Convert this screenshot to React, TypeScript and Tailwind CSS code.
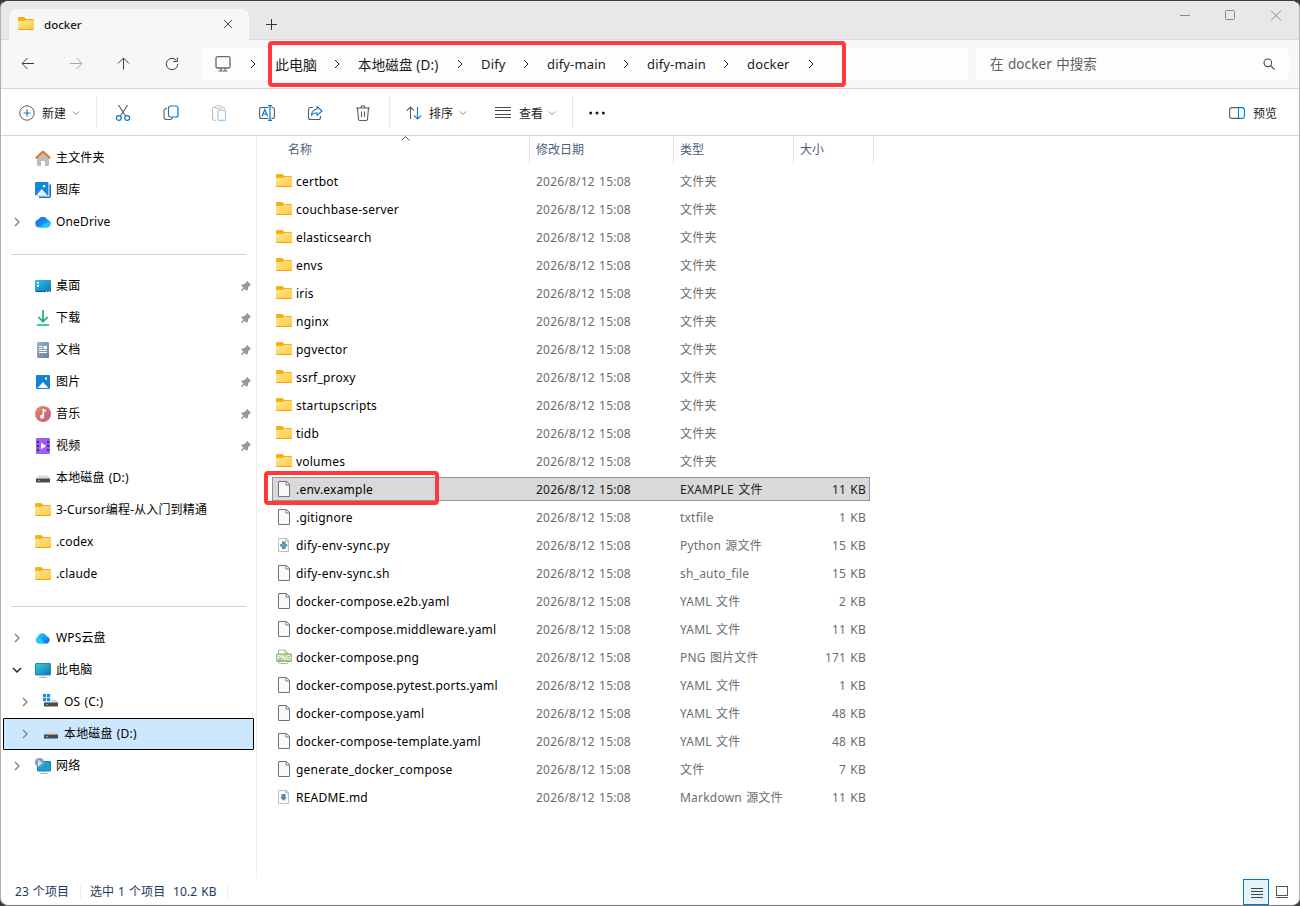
import type { ReactNode } from 'react'
import clsx from 'clsx'

type IconProps = { className?: string }

type NavItem = {
  label: string
  icon: ReactNode
  pinned?: boolean
  expand?: 'closed' | 'open'
  nested?: boolean
  selected?: boolean
}

type FileKind = 'folder' | 'file' | 'python' | 'png' | 'markdown'

type FileRow = {
  name: string
  kind: FileKind
  type: string
  size?: string
  selected?: boolean
}

/* ---------- icons ---------- */

function Chevron({ className }: IconProps) {
  return (
    <svg viewBox="0 0 10 10" className={clsx('size-[10px] shrink-0', className)} fill="none" stroke="currentColor">
      <path d="M3 1l4 4-4 4" />
    </svg>
  )
}

function ChevronDown({ className }: IconProps) {
  return (
    <svg viewBox="0 0 8 8" className={clsx('size-2 shrink-0', className)} fill="none" stroke="currentColor">
      <path d="M1 2.5l3 3 3-3" />
    </svg>
  )
}

function FolderIcon({ className }: IconProps) {
  return (
    <svg viewBox="0 0 16 16" className={clsx('size-4 shrink-0', className)}>
      <defs>
        <linearGradient id="folder" x1="0" y1="0" x2="1" y2="1">
          <stop offset="0" stopColor="#ffe69a" />
          <stop offset="1" stopColor="#ffc937" />
        </linearGradient>
      </defs>
      <path d="M0 2.2Q0 1 1.2 1h4.600q.6 0 1 .4L8.400 3H14.800Q16 3 16 4.200V8H0z" fill="#f5b012" />
      <path d="M0 5h6.400l1.600-1h7q1 0 1 1v8q0 1-1 1H1q-1 0-1-1z" fill="url(#folder)" />
      <path d="M.4 13.500h15.200" stroke="#e8a617" strokeWidth="1" />
    </svg>
  )
}

function FileIcon() {
  return (
    <svg viewBox="0 0 16 16" className="size-4 shrink-0" fill="#fafafa" stroke="#757575">
      <path d="M2.500.5h8l3 3v12h-11z" />
      <path d="M10 .5V4h3.500" fill="none" />
    </svg>
  )
}

function PythonIcon() {
  return (
    <svg viewBox="0 0 16 16" className="size-4 shrink-0">
      <path d="M2.500 1.500h8l2 2v11h-10z" fill="#fafafa" stroke="#c2c2c2" />
      <path d="M10 1v3h3" fill="none" stroke="#a5a5a5" />
      <path d="M6 4.500h3.500V7H11l.5 2.500H9.500V12H6V9.500H4L4.300 7H6z" fill="#4a8db0" />
      <path d="M6 8h3.500" stroke="#d5e6ee" strokeWidth=".6" />
    </svg>
  )
}

function MarkdownIcon() {
  return (
    <svg viewBox="0 0 16 16" className="size-4 shrink-0">
      <path d="M2.500 1.500h8l2 2v11h-10z" fill="#fafafa" stroke="#c2c2c2" />
      <path d="M10 1v3h3" fill="none" stroke="#a5a5a5" />
      <path d="M5.500 5h4v3.500H11l-3.500 3.300L4 8.500h1.500z" fill="#4a8db0" />
    </svg>
  )
}

function PngIcon() {
  return (
    <svg viewBox="0 0 16 16" className="size-4 shrink-0 overflow-visible tracking-normal">
      <path d="M2.500 5V2q0-1 1-1H9l3.500 3.500M9 1v3.500h3.500M2.500 12.500q0 2 2 2h6q2 0 2-2" fill="none" stroke="#9cc283" />
      <rect y="4.500" width="16" height="8.500" rx="1" fill="#9cc283" />
      <text x="8" y="11.200" textAnchor="middle" fill="#fff" fontSize="6.500" fontWeight="700" fontFamily="Liberation Sans, sans-serif">
        PNG
      </text>
    </svg>
  )
}

const fileIcons: Record<FileKind, ReactNode> = {
  folder: <FolderIcon className="-mt-px" />,
  file: <FileIcon />,
  python: <PythonIcon />,
  png: <PngIcon />,
  markdown: <MarkdownIcon />,
}

function HomeIcon() {
  return (
    <svg viewBox="0 0 16 16" className="size-4">
      <path d="M2 7l6-5 6 5v8q0 1-1 1h-3v-5H6v5H3q-1 0-1-1z" fill="#bdbdbd" />
      <path d="M.8 8.300L8 1.600l7.200 6.700" fill="none" stroke="#e87524" strokeWidth="2" strokeLinejoin="round" />
    </svg>
  )
}

function GalleryIcon() {
  return (
    <svg viewBox="0 0 16 16" className="size-4">
      <path d="M4 15.200h10q1.200 0 1.200-1.200V2.500" fill="none" stroke="#2768b4" strokeWidth="1.600" />
      <rect width="13.500" height="13.500" rx="1" fill="#1688d9" />
      <path d="M1 13.500l5.800-6.500 5.700 6.500z" fill="#eaf5fd" />
      <rect x="8" y="3" width="2.200" height="2.200" fill="#fff" />
    </svg>
  )
}

function CloudIcon({ className }: IconProps) {
  return (
    <svg viewBox="0 0 16 16" className={clsx('size-4', className)}>
      <defs>
        <linearGradient id="cloud" x1="0" y1="0" x2="1" y2="1">
          <stop offset="0" stopColor="#1a68e0" />
          <stop offset=".5" stopColor="#1487f2" />
          <stop offset="1" stopColor="#28c9f8" />
        </linearGradient>
      </defs>
      <path d="M4 13.500a4 4 0 0 1-.6-7.900 5 5 0 0 1 9-.2A4.200 4.200 0 0 1 12 13.500z" fill="url(#cloud)" />
      <path d="M5 13.500Q9 8.500 15.600 8q.8 1.500 0 3-1.200 2.500-3.600 2.500z" fill="#27c4f7" />
    </svg>
  )
}

function WpsCloudIcon() {
  return (
    <svg viewBox="0 0 16 16" className="size-4">
      <defs>
        <linearGradient id="wps" x1="0" y1="0" x2="1" y2="1">
          <stop offset="0" stopColor="#23d4f5" />
          <stop offset=".55" stopColor="#1599fa" />
          <stop offset="1" stopColor="#1d58ee" />
        </linearGradient>
      </defs>
      <path d="M4.500 13.500A3.500 3.500 0 0 1 3 6.800a4.600 4.600 0 0 1 8.700-.6 3.800 3.800 0 0 1 .3 7.300z" fill="url(#wps)" />
      <path d="M4.500 13.500A3.500 3.500 0 0 1 2.600 7q3 .3 4.400 3.200 1.500 2.800 4 3.300z" fill="#1fd0f4" />
    </svg>
  )
}

function DesktopIcon() {
  return (
    <svg viewBox="0 0 16 16" className="size-4">
      <defs>
        <linearGradient id="desk" x1="0" y1="0" x2="1" y2="1">
          <stop offset="0" stopColor="#2cc5dd" />
          <stop offset="1" stopColor="#1173bd" />
        </linearGradient>
      </defs>
      <rect y="2" width="16" height="12" rx="1" fill="url(#desk)" />
      <path d="M2 4h2v1.700H2zM2 7h2v1.700H2z" fill="#fff" />
      <path d="M1 13.500h14" stroke="#0f5a93" />
      <path d="M11 13.500h1M13.500 13.500h1" stroke="#fff" />
    </svg>
  )
}

function DownloadIcon() {
  return (
    <svg viewBox="0 0 16 16" className="size-4" fill="none" stroke="#17ab8d" strokeWidth="1.700">
      <path d="M8 0v11.500M3.300 7L8 11.700 12.700 7M2 15h12" />
    </svg>
  )
}

function DocumentIcon() {
  return (
    <svg viewBox="0 0 16 16" className="size-4">
      <defs>
        <linearGradient id="doc" x1="0" y1="0" x2="1" y2="1">
          <stop offset="0" stopColor="#9db1c9" />
          <stop offset="1" stopColor="#6681a3" />
        </linearGradient>
      </defs>
      <rect x="2" width="12" height="16" rx="1" fill="url(#doc)" />
      <path d="M4 4.500h3.500M4 6.500h3.500M4 8.500h8M4 10.500h8" stroke="#fff" />
      <rect x="8.500" y="4" width="3.500" height="3" fill="#fff" />
    </svg>
  )
}

function PictureIcon() {
  return (
    <svg viewBox="0 0 16 16" className="size-4">
      <rect x="1" y="1" width="14" height="14" rx="1" fill="#1583d2" />
      <path d="M2.500 14L8 8l5.500 6z" fill="#f2f9fe" />
      <rect x="10" y="3.500" width="2" height="2" fill="#fff" />
    </svg>
  )
}

function MusicIcon() {
  return (
    <svg viewBox="0 0 16 16" className="size-4">
      <defs>
        <linearGradient id="music" x1="0" y1="0" x2="1" y2="1">
          <stop offset="0" stopColor="#ec8858" />
          <stop offset="1" stopColor="#b85a94" />
        </linearGradient>
      </defs>
      <circle cx="8" cy="8" r="8" fill="url(#music)" />
      <path d="M8.300 10.500V3.500l2.700 1.700" fill="none" stroke="#fff" strokeWidth="1.500" />
      <circle cx="7" cy="10.800" r="2" fill="#fff" />
    </svg>
  )
}

function VideoIcon() {
  return (
    <svg viewBox="0 0 16 16" className="size-4">
      <rect x="1" width="14" height="16" rx="1" fill="#a05cf0" />
      <path d="M3 3v12M13 3v12" stroke="#3f2466" strokeWidth="1.800" strokeDasharray="2 2" />
      <path d="M6 4.700v6.600L11.200 8z" fill="#fff" />
    </svg>
  )
}

function DriveIcon({ system }: { system?: boolean }) {
  return (
    <svg viewBox="0 0 16 16" className="size-4">
      <path d="M3 5.500h10l2 3H1z" fill="#dadada" />
      <rect x="1" y="8.500" width="14" height="4" rx=".5" fill="#4b4b4b" />
      <path d="M3 10.500h2" stroke="#3ddb69" strokeWidth="1" />
      {system && (
        <>
          <rect width="8" height="8" fill="#fff" />
          <path d="M0 0h3.200v3.200H0zM4 0h3.200v3.200H4zM0 4h3.200v3.200H0zM4 4h3.200v3.200H4z" fill="#1590e0" />
        </>
      )}
    </svg>
  )
}

function ComputerIcon() {
  return (
    <svg viewBox="0 0 16 16" className="size-4">
      <defs>
        <linearGradient id="pc" x1="0" y1="0" x2="1" y2="1">
          <stop offset="0" stopColor="#35d0dc" />
          <stop offset="1" stopColor="#1471b6" />
        </linearGradient>
      </defs>
      <rect x=".5" y="1.500" width="15" height="11.500" rx=".5" fill="url(#pc)" stroke="#2583ae" />
      <path d="M8 13v2.500M4 15.500h8" stroke="#a9b4bd" />
    </svg>
  )
}

function NetworkIcon() {
  return (
    <svg viewBox="0 0 16 16" className="size-4">
      <rect x="2.500" y="3.500" width="13" height="9.500" rx=".5" fill="#1b9fd0" stroke="#2176a8" />
      <path d="M9 13v2.500M5 15.500h8" stroke="#a9b4bd" />
      <circle cx="4.500" cy="4.500" r="4.500" fill="#6f9fc4" />
      <path d="M1.500 2.500q1.500-1.500 3 0T7 4 5 7 3 5 1.500 2.500z" fill="#d3e5f0" />
    </svg>
  )
}

function PinIcon() {
  return (
    <svg viewBox="0 0 12 12" className="size-3 shrink-0" fill="#8e9aa3">
      <path d="M7 .8L11.200 5l-1.400.6-1.600 1.700-.4 2.700-1.200.7-2-2L1.500 11.200l-.7-.7L3.300 7.600l-2-2L2 4.400l2.700-.4L6.400 2.200z" />
    </svg>
  )
}

/* ---------- data ---------- */

const quickLinks: NavItem[] = [
  { label: '主文件夹', icon: <HomeIcon /> },
  { label: '图库', icon: <GalleryIcon /> },
  { label: 'OneDrive', icon: <CloudIcon />, expand: 'closed' },
]

const pinnedLinks: NavItem[] = [
  { label: '桌面', icon: <DesktopIcon />, pinned: true },
  { label: '下载', icon: <DownloadIcon />, pinned: true },
  { label: '文档', icon: <DocumentIcon />, pinned: true },
  { label: '图片', icon: <PictureIcon />, pinned: true },
  { label: '音乐', icon: <MusicIcon />, pinned: true },
  { label: '视频', icon: <VideoIcon />, pinned: true },
  { label: '本地磁盘 (D:)', icon: <DriveIcon /> },
  { label: '3-Cursor编程-从入门到精通', icon: <FolderIcon /> },
  { label: '.codex', icon: <FolderIcon /> },
  { label: '.claude', icon: <FolderIcon /> },
]

const treeLinks: NavItem[] = [
  { label: 'WPS云盘', icon: <WpsCloudIcon />, expand: 'closed' },
  { label: '此电脑', icon: <ComputerIcon />, expand: 'open' },
  { label: 'OS (C:)', icon: <DriveIcon system />, expand: 'closed', nested: true },
  { label: '本地磁盘 (D:)', icon: <DriveIcon />, expand: 'closed', nested: true, selected: true },
  { label: '网络', icon: <NetworkIcon />, expand: 'closed' },
]

const files: FileRow[] = [
  { name: 'certbot', kind: 'folder', type: '文件夹' },
  { name: 'couchbase-server', kind: 'folder', type: '文件夹' },
  { name: 'elasticsearch', kind: 'folder', type: '文件夹' },
  { name: 'envs', kind: 'folder', type: '文件夹' },
  { name: 'iris', kind: 'folder', type: '文件夹' },
  { name: 'nginx', kind: 'folder', type: '文件夹' },
  { name: 'pgvector', kind: 'folder', type: '文件夹' },
  { name: 'ssrf_proxy', kind: 'folder', type: '文件夹' },
  { name: 'startupscripts', kind: 'folder', type: '文件夹' },
  { name: 'tidb', kind: 'folder', type: '文件夹' },
  { name: 'volumes', kind: 'folder', type: '文件夹' },
  { name: '.env.example', kind: 'file', type: 'EXAMPLE 文件', size: '11 KB', selected: true },
  { name: '.gitignore', kind: 'file', type: 'txtfile', size: '1 KB' },
  { name: 'dify-env-sync.py', kind: 'python', type: 'Python 源文件', size: '15 KB' },
  { name: 'dify-env-sync.sh', kind: 'file', type: 'sh_auto_file', size: '15 KB' },
  { name: 'docker-compose.e2b.yaml', kind: 'file', type: 'YAML 文件', size: '2 KB' },
  { name: 'docker-compose.middleware.yaml', kind: 'file', type: 'YAML 文件', size: '11 KB' },
  { name: 'docker-compose.png', kind: 'png', type: 'PNG 图片文件', size: '171 KB' },
  { name: 'docker-compose.pytest.ports.yaml', kind: 'file', type: 'YAML 文件', size: '1 KB' },
  { name: 'docker-compose.yaml', kind: 'file', type: 'YAML 文件', size: '48 KB' },
  { name: 'docker-compose-template.yaml', kind: 'file', type: 'YAML 文件', size: '48 KB' },
  { name: 'generate_docker_compose', kind: 'file', type: '文件', size: '7 KB' },
  { name: 'README.md', kind: 'markdown', type: 'Markdown 源文件', size: '11 KB' },
]

const crumbs = [
  { label: '此电脑', width: 'w-[42px] text-sm' },
  { label: '本地磁盘 (D:)', width: 'w-[82px] text-[13.500px] tracking-[0.15px]' },
  { label: 'Dify', width: 'w-[25px] text-[13px] tracking-[0.15px]' },
  { label: 'dify-main', width: 'w-[59px] text-[13px] tracking-[0.15px]' },
  { label: 'dify-main', width: 'w-[59px] text-[13px] tracking-[0.15px]' },
  { label: 'docker', width: 'w-[44px] text-[13px] tracking-[0.15px]' },
]

/* ---------- sections ---------- */

function TitleBar() {
  return (
    <div className="flex h-[39px] shrink-0 border-b border-[#d9d9d9] bg-[#e8e8e8] pl-2">
      <div className="mt-2 flex h-[31px] w-[240px] items-center rounded-t-lg bg-[#f7f7f7] pr-4 pl-[9px]">
        <FolderIcon className="-mt-0.5" />
        <span className="ml-2.5 flex-1 text-[11.500px] font-medium text-[#1a1a1a]">docker</span>
        <svg viewBox="0 0 10 10" className="-mt-0.5 size-[10px]" fill="none" stroke="#444">
          <path d="M1 1l8 8M9 1L1 9" />
        </svg>
      </div>
      <svg viewBox="0 0 11 11" className="mt-[18px] ml-[17px] size-[11px]" fill="none" stroke="#333">
        <path d="M5.500 0v11M0 5.500h11" />
      </svg>
      <div className="mt-[9px] mr-[17px] ml-auto flex h-[11px] gap-[35px] text-[#8a8a8a]">
        <svg viewBox="0 0 11 11" className="size-[11px]" stroke="currentColor">
          <path d="M1 5.500h10" />
        </svg>
        <svg viewBox="0 0 11 11" className="size-[11px]" fill="none" stroke="currentColor">
          <rect x=".5" y=".5" width="9" height="9" rx="1" />
        </svg>
        <svg viewBox="0 0 11 11" className="size-[11px]" fill="none" stroke="currentColor">
          <path d="M0 .5l10 10M10 .5l-10 10" />
        </svg>
      </div>
    </div>
  )
}

function NavButton({ children, muted }: { children: ReactNode; muted?: boolean }) {
  return (
    <button className={clsx('flex w-12 justify-center', muted ? 'text-[#a8a8a8]' : 'text-[#3b3b3b]')}>
      <svg viewBox="0 0 14 14" className="size-[14px]" fill="none" stroke="currentColor">
        {children}
      </svg>
    </button>
  )
}

function AddressBar() {
  return (
    <div className="flex h-[49px] shrink-0 items-center border-b border-[#d6d6d6] bg-[#f7f7f7] pr-2.5 pl-[3px]">
      <NavButton>
        <path d="M13 6.500H1.500M6.500 1L1 6.500 6.500 12" />
      </NavButton>
      <NavButton muted>
        <path d="M1 6.500h11.500M7.500 1L13 6.500 7.500 12" />
      </NavButton>
      <NavButton>
        <path d="M6.500 12.500V1.500M1 6.500L6.500 1 12 6.500" />
      </NavButton>
      <NavButton>
        <path d="M12.700 7A5.700 5.700 0 1 1 11 3M12.300.5v4h-4" />
      </NavButton>
      <div className="ml-[6px] flex h-8 w-[766px] items-center rounded-[4px] bg-[#fdfdfd] text-[#1b1b1b]">
        <svg viewBox="0 0 16 16" className="ml-[13px] size-4" fill="none" stroke="#666">
          <rect x="1" y=".7" width="14" height="11.300" rx="1.500" strokeWidth="1.300" />
          <path d="M6 12v3M10 12v3M3.500 15h9" strokeWidth="1.200" />
        </svg>
        <span className="flex w-[44px] justify-center">
          <Chevron />
        </span>
        {crumbs.map((crumb, i) => (
          <div key={i} className="flex items-center">
            <span className={clsx('pt-0.5 whitespace-nowrap', crumb.width)}>{crumb.label}</span>
            <span className="flex w-[41px] justify-center pr-0.5">
              <Chevron />
            </span>
          </div>
        ))}
      </div>
      <div className="ml-2 flex h-8 flex-1 items-center justify-between rounded-[4px] bg-[#fdfdfd] pr-[14px] pl-[14px] text-[13.500px] tracking-[0.1px] text-[#5f5f5f] [word-spacing:0.7px]">
        <span className="pt-px">在 docker 中搜索</span>
        <svg viewBox="0 0 12 12" className="size-3" fill="none" stroke="#444" strokeWidth="1.100">
          <circle cx="4.800" cy="4.800" r="3.800" />
          <path d="M7.600 7.600l4 4" />
        </svg>
      </div>
    </div>
  )
}

function ToolDivider({ className }: IconProps) {
  return <span className={clsx('-mt-0.5 h-8 w-px shrink-0 bg-[#e8e8e8]', className)} />
}

function Toolbar() {
  return (
    <div className="flex h-[47px] shrink-0 items-center border-b border-[#d6d6d6] bg-white pt-0.5 text-xs text-[#1b1b1b]">
      <svg viewBox="0 0 16 16" className="ml-[18px] size-4" fill="none">
        <circle cx="8" cy="8" r="7.200" stroke="#5b5b5b" />
        <path d="M8 4.500v7M4.500 8h7" stroke="#0a78d0" strokeWidth="1.200" />
      </svg>
      <span className="ml-[7px] pt-px">新建</span>
      <ChevronDown className="ml-[6px] text-[#8a8a8a]" />
      <ToolDivider className="ml-4" />
      <div className="flex w-[292px] items-center gap-8 pl-[18px]">
        <svg viewBox="0 0 16 16" className="size-4 shrink-0" fill="none">
          <path d="M3.500 0l7 11M12.500 0l-7 11" stroke="#5b5b5b" strokeWidth="1.100" />
          <circle cx="3.800" cy="13" r="2.400" stroke="#0a78d0" strokeWidth="1.200" />
          <circle cx="12.200" cy="13" r="2.400" stroke="#0a78d0" strokeWidth="1.200" />
        </svg>
        <svg viewBox="0 0 16 16" className="size-4 shrink-0" fill="none">
          <path d="M4 3.500H3Q1 4 1 6v6q0 2.500 2.500 2.500H7q2 0 2.500-2" stroke="#5b5b5b" strokeWidth="1.100" />
          <rect x="5.500" y="1" width="9.500" height="11" rx="2" stroke="#0a78d0" strokeWidth="1.200" />
        </svg>
        <svg viewBox="0 0 16 16" className="size-4 shrink-0" fill="none">
          <path d="M5 15.300H3q-1.500 0-1.500-1.500v-10q0-1.500 1.500-1.500h1.500M11 2.300h1q1.500 0 1.500 1.500" stroke="#bdbdbd" strokeWidth="1.100" />
          <rect x="4.500" y=".8" width="6" height="2.500" rx="1" stroke="#bdbdbd" />
          <rect x="7" y="5.200" width="7.500" height="10.200" rx="1" stroke="#9dcbee" strokeWidth="1.200" />
        </svg>
        <svg viewBox="0 0 16 16" className="size-4 shrink-0" fill="none">
          <path d="M9.500 2.500H2.500Q.6 2.500.6 4.500v7q0 2 1.900 2h7M12.500 2.500h1q1.900 0 1.900 2v7q0 2-1.900 2h-1" stroke="#5b5b5b" strokeWidth="1.100" />
          <path d="M3 11.300L5.800 4.500l2.800 6.800M4 9h3.700M11 .6v14.800M9 .6h4M9 15.400h4" stroke="#0a78d0" strokeWidth="1.200" />
        </svg>
        <svg viewBox="0 0 16 16" className="size-4 shrink-0" fill="none">
          <path d="M6 2.500H3.500Q1.500 2.500 1.500 4.500v8q0 2 2 2h8q2 0 2-2V11" stroke="#5b5b5b" strokeWidth="1.100" />
          <path d="M10 1.500L15 6l-5 4.300V7.800Q6.500 7.500 4.500 10.300 5 4.800 10 4z" stroke="#0a78d0" strokeWidth="1.100" strokeLinejoin="round" />
        </svg>
        <svg viewBox="0 0 16 16" className="size-4 shrink-0" fill="none" stroke="#5b5b5b" strokeWidth="1.100">
          <path d="M1 3h14M6 3q0-2.200 2-2.200T10 3M2.500 3l1 11q.2 1.500 1.500 1.500h6q1.300 0 1.500-1.500l1-11M6.500 6.500v5.500M9.500 6.500v5.500" />
        </svg>
      </div>
      <ToolDivider />
      <svg viewBox="0 0 16 16" className="ml-4 size-4" fill="none" strokeWidth="1.100">
        <path d="M4.500 14V2M.8 5.700L4.500 2l3.700 3.700" stroke="#5b5b5b" />
        <path d="M11.500 2v12M7.800 10.300l3.700 3.700 3.700-3.700" stroke="#0a78d0" />
      </svg>
      <span className="ml-[7px] pt-px">排序</span>
      <ChevronDown className="ml-[6px] text-[#8a8a8a]" />
      <svg viewBox="0 0 16 12" className="ml-7 h-3 w-4" stroke="#4a4a4a">
        <path d="M0 .5h16M0 3.500h16M0 7.500h16M0 10.500h16" />
      </svg>
      <span className="ml-2 pt-px">查看</span>
      <ChevronDown className="ml-[5px] text-[#8a8a8a]" />
      <ToolDivider className="ml-4" />
      <svg viewBox="0 0 16 4" className="ml-4 h-1 w-4" fill="#1b1b1b">
        <circle cx="1.700" cy="2" r="1.500" />
        <circle cx="8" cy="2" r="1.500" />
        <circle cx="14.300" cy="2" r="1.500" />
      </svg>
      <svg viewBox="0 0 16 12" className="ml-auto h-3 w-4" fill="none">
        <path d="M9.500.6H3Q.6.6.6 3v6q0 2.400 2.400 2.400h6.500" stroke="#5b5b5b" strokeWidth="1.100" />
        <path d="M9.500.6H13q2.400 0 2.400 2.400v6q0 2.400-2.400 2.400H9.500z" stroke="#0a78d0" strokeWidth="1.100" />
      </svg>
      <span className="mr-[22px] ml-2 pt-px">预览</span>
    </div>
  )
}

function NavRow({ item }: { item: NavItem }) {
  return (
    <div
      className={clsx(
        'ml-0.5 flex h-8 w-[251px] items-center border pr-[1px] text-xs tracking-[0.15px] text-black [word-spacing:1px]',
        item.nested ? 'pl-[15px]' : 'pl-[7px]',
        item.selected ? 'rounded-[1px] border-black bg-[#cce8ff]' : 'border-transparent',
      )}
    >
      <span className="flex w-3 justify-center">
        {item.expand === 'closed' && <Chevron className="stroke-[1.400] text-[#858585]" />}
        {item.expand === 'open' && (
          <svg viewBox="0 0 10 10" className="size-[10px] shrink-0" fill="none" stroke="#222" strokeWidth="1.500">
            <path d="M1 3l4 4 4-4" />
          </svg>
        )}
      </span>
      <span className="ml-3 flex size-4 shrink-0 items-center justify-center">{item.icon}</span>
      <span className="ml-[5px] flex-1 whitespace-nowrap">{item.label}</span>
      {item.pinned && <PinIcon />}
    </div>
  )
}

function NavDivider() {
  return (
    <div className="flex h-8 items-center pl-2.5">
      <span className="h-px w-[235px] bg-[#d4d4d4]" />
    </div>
  )
}

function Sidebar() {
  return (
    <nav className="w-[256px] shrink-0 border-r border-[#f0f0f0] pt-1.5">
      {quickLinks.map((item) => (
        <NavRow key={item.label} item={item} />
      ))}
      <NavDivider />
      {pinnedLinks.map((item) => (
        <NavRow key={item.label} item={item} />
      ))}
      <NavDivider />
      {treeLinks.map((item) => (
        <NavRow key={item.label} item={item} />
      ))}
    </nav>
  )
}

function FileList() {
  return (
    <main className="flex-1">
      <div className="relative flex h-7 text-xs text-[#4c607a]">
        <div className="flex w-[273px] items-center border-r border-[#e5e5e5] pl-[31px]">名称</div>
        <div className="flex w-[144px] items-center border-r border-[#e5e5e5] pl-1.5">修改日期</div>
        <div className="flex w-[120px] items-center border-r border-[#e5e5e5] pl-1.5">类型</div>
        <div className="flex w-20 items-center border-r border-[#e5e5e5] pl-1.5">大小</div>
        <svg viewBox="0 0 9 5" className="absolute top-0 left-[144px] h-[5px] w-[9px]" fill="none" stroke="#555">
          <path d="M.5 4.500l4-4 4 4" />
        </svg>
      </div>
      <div className="mt-[5px]">
        {files.map((file) => (
          <div
            key={file.name}
            className={clsx(
              'mb-1 ml-[15px] flex h-6 w-[598px] items-center border pr-[3px] pl-[3px] text-xs tracking-[0.22px] whitespace-nowrap [word-spacing:0.8px]',
              file.selected ? 'border-[#939393] bg-[#d9d9d9] text-[#1b1b1b]' : 'border-transparent text-[#6d6d6d]',
            )}
          >
            {fileIcons[file.kind]}
            <span className="ml-1 w-[240px] pt-0.5 text-black">{file.name}</span>
            <span className="w-[144px] pt-0.5">2026/8/12 15:08</span>
            <span className="w-[120px] pt-0.5">{file.type}</span>
            <span className="flex-1 pt-0.5 text-right">{file.size}</span>
          </div>
        ))}
      </div>
    </main>
  )
}

function StatusBar() {
  return (
    <footer className="flex h-[26px] shrink-0 items-center pl-[14px] text-xs tracking-[0.1px] whitespace-nowrap text-[#1e395b] [word-spacing:0.7px]">
      <span className="w-[65px]">23 个项目</span>
      <span className="h-4 w-px bg-[#f0f0f0]" />
      <span className="ml-[9px] w-[83px]">选中 1 个项目</span>
      <span className="w-[54px]">10.2 KB</span>
      <span className="h-4 w-px bg-[#f0f0f0]" />
      <button className="ml-auto flex h-[26px] w-[26px] items-center justify-center border border-[#0078d7] bg-[#e5f3fb]">
        <svg viewBox="0 0 12 12" className="mt-0.5 ml-0.5 size-3" stroke="#444">
          <path d="M0 1.500h12M0 4.500h12M0 7.500h12M0 10.500h12" />
        </svg>
      </button>
      <svg viewBox="0 0 12 12" className="mr-[11px] ml-[7px] size-3" fill="none" stroke="#555">
        <rect x=".5" y=".5" width="11" height="9" />
        <path d="M0 11.500h12" />
      </svg>
    </footer>
  )
}

export default function App() {
  return (
    <div className="h-[906px] w-[1300px] overflow-hidden bg-[#3a3a3c] font-['Noto_Sans','Noto_Sans_CJK_SC',sans-serif]">
      <div className="relative flex h-[906px] flex-col overflow-hidden rounded-lg border border-t-[#3a3a3c] border-r-[#b5b5b5] border-b-[#77777a] border-l-[#b0b0b0] bg-white">
        <TitleBar />
        <AddressBar />
        <Toolbar />
        <div className="flex min-h-0 flex-1">
          <Sidebar />
          <FileList />
        </div>
        <StatusBar />

        {/* highlight frames over the path and the selected file */}
        <div className="absolute top-10 left-[267px] h-[46px] w-[578px] rounded-[4px] border-4 border-[#fe3939]" />
        <div className="absolute top-[470px] left-[263px] h-[34px] w-[175px] rounded-[4px] border-4 border-[#fe3939]" />
      </div>
    </div>
  )
}
